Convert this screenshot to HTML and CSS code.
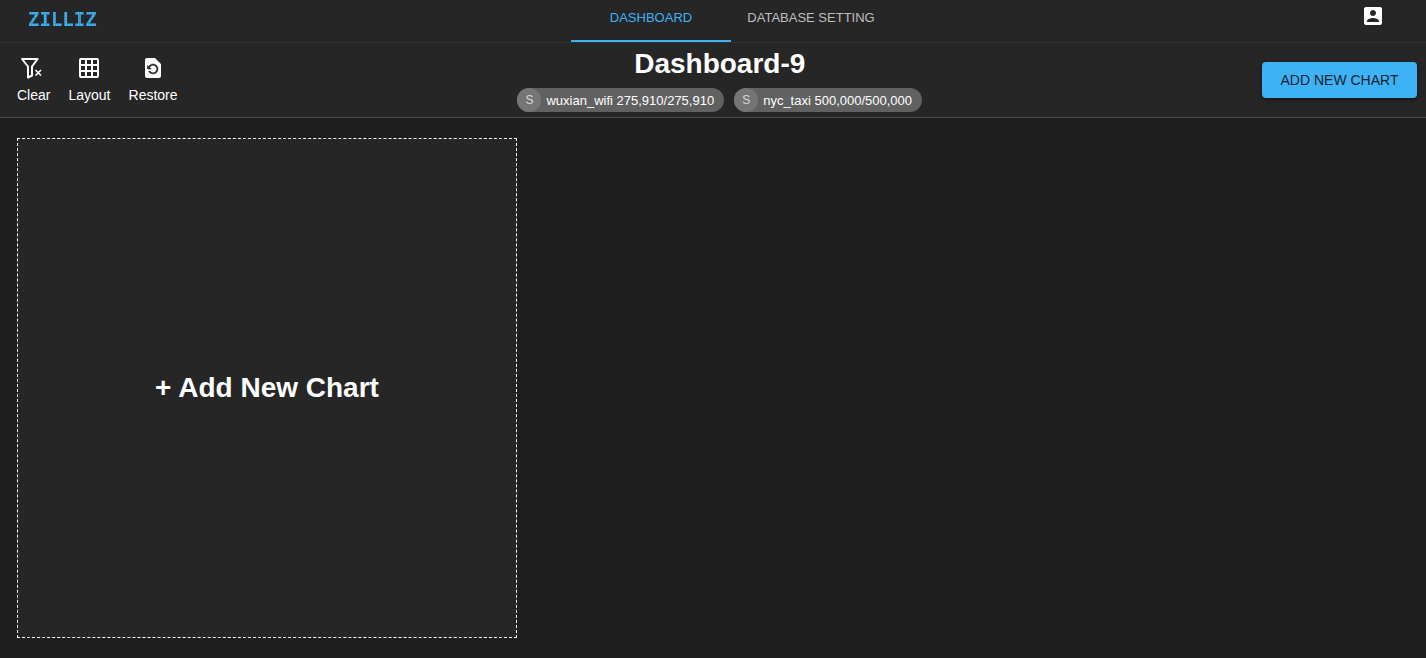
FILE: index.html
```
<!DOCTYPE html>
<html lang="en">
<head>
<meta charset="utf-8">
<title>Zilliz - Dashboard-9</title>
<meta name="viewport" content="width=device-width, initial-scale=1">
<link rel="stylesheet" href="styles.css">
</head>
<body>
<header class="topbar">
  <a class="logo" href="#">ZILLIZ</a>
  <nav class="tabs">
    <a class="tab tab-active" href="#dashboard" aria-current="page">DASHBOARD</a>
    <a class="tab" href="#database">DATABASE SETTING</a>
  </nav>
  <button class="account" type="button" aria-label="Account">
    <svg width="24" height="24" viewBox="0 0 24 24" fill="currentColor" aria-hidden="true"><path d="M3 5v14c0 1.100.890 2 2 2h14c1.100 0 2-.900 2-2V5c0-1.100-.900-2-2-2H5c-1.110 0-2 .900-2 2zm12 4c0 1.660-1.340 3-3 3s-3-1.340-3-3 1.340-3 3-3 3 1.340 3 3zm-9 8c0-2 4-3.100 6-3.100s6 1.100 6 3.100v1H6v-1z"/></svg>
  </button>
</header>
<section class="toolbar">
  <div class="tools">
    <button class="tool" type="button">
      <svg width="26" height="24" viewBox="2 0 26 24" fill="none" stroke="currentColor" aria-hidden="true"><path d="M3 3h15.600L13 10.500V19.500l-4 2V10.500z" stroke-width="2" stroke-linejoin="round"/><path d="M16.500 14l5.500 5.500M22 14l-5.500 5.500" stroke-width="1.600"/></svg>
      <span>Clear</span>
    </button>
    <button class="tool" type="button">
      <svg width="24" height="24" viewBox="0 0 24 24" fill="none" stroke="currentColor" stroke-width="2" aria-hidden="true"><rect x="3" y="3" width="18" height="18" rx="1"/><path d="M9 3v18M15 3v18M3 9h18M3 15h18"/></svg>
      <span>Layout</span>
    </button>
    <button class="tool" type="button">
      <svg width="24" height="24" viewBox="0 0 24 24" fill="currentColor" aria-hidden="true"><path d="M14 2H6c-1.100 0-1.990.900-1.990 2L4 20c0 1.100.890 2 1.990 2H18c1.100 0 2-.900 2-2V8l-6-6zm-2 16c-2.050 0-3.810-1.240-4.580-3h1.710c.630.900 1.680 1.500 2.870 1.500 1.930 0 3.500-1.570 3.500-3.500S13.930 9.500 12 9.500c-1.350 0-2.520.780-3.100 1.900l1.600 1.600h-4V9l1.300 1.300C8.690 8.920 10.230 8 12 8c2.760 0 5 2.240 5 5s-2.240 5-5 5z"/><path class="restore-arrow" d="M7.600 15.200a5 5 0 1 0 .600-5.400M6.500 9v4h4" fill="none" stroke-width=".500"/></svg>
      <span>Restore</span>
    </button>
  </div>
  <div class="summary">
    <h1 class="title">Dashboard-9</h1>
    <div class="chips">
      <div class="chip"><span class="avatar">S</span><span>wuxian_wifi 275,910/275,910</span></div>
      <div class="chip"><span class="avatar">S</span><span>nyc_taxi 500,000/500,000</span></div>
    </div>
  </div>
  <button class="add-button" type="button">ADD NEW CHART</button>
</section>
<main class="board">
  <button class="add-card" type="button">+ Add New Chart</button>
</main>
</body>
</html>
```
FILE: styles.css
```
* { box-sizing: border-box; }
body {
  margin: 0;
  min-height: 100vh;
  background: #1e1e1e;
  color: #fff;
  font-family: "Liberation Sans", Arial, sans-serif;
  font-size: 14px;
}
button {
  margin: 0;
  padding: 0;
  border: 0;
  background: none;
  color: inherit;
  font: inherit;
  cursor: pointer;
}
a { color: inherit; text-decoration: none; }
svg { display: block; }

.topbar {
  display: flex;
  justify-content: space-between;
  align-items: flex-start;
  padding: 0 41px 0 28px;
  background: #262626;
  border-bottom: 1px solid #323232;
}
.logo {
  min-width: 73px;
  padding-top: 8px;
  font: bold 19px/22px "DejaVu Sans Mono", monospace;
  color: transparent;
  background:
    repeating-linear-gradient(90deg, #2a7fb080 0 1px, transparent 1px 3px),
    repeating-linear-gradient(0deg, #2a7fb080 0 1px, transparent 1px 3px),
    #3db3f5;
  background-clip: text;
  -webkit-background-clip: text;
}
.tabs { display: flex; }
.tab {
  width: 160px;
  height: 42px;
  padding-top: 10px;
  font-size: 13px;
  line-height: 16px;
  text-align: center;
  color: #bebebe;
}
.tab-active {
  color: #3db3f5;
  border-bottom: 2px solid #3db3f5;
}
.account { padding-top: 4px; }

.toolbar {
  display: flex;
  justify-content: space-between;
  align-items: center;
  padding: 4px 9px 5px 17px;
  background: #262626;
  border-bottom: 1px solid #484848;
}
.tools { display: flex; gap: 18px; }
.tool {
  display: flex;
  flex-direction: column;
  align-items: center;
  gap: 7px;
  line-height: 16px;
}
.restore-arrow { stroke: #262626; }
.summary {
  display: flex;
  flex-direction: column;
  align-items: center;
  gap: 7px;
}
.title {
  margin: 0;
  font-size: 28px;
  line-height: 34px;
}
.chips { display: flex; gap: 10px; }
.chip {
  display: flex;
  align-items: center;
  gap: 5px;
  padding-right: 10px;
  border-radius: 12px;
  background: #616161;
  font-size: 13px;
}
.avatar {
  width: 24px;
  border-radius: 50%;
  background: #757575;
  color: #d8d8d8;
  font-size: 12px;
  line-height: 24px;
  text-align: center;
}
.add-button {
  min-width: 155px;
  padding: 10px 16px;
  border-radius: 4px;
  background: #3db3f5;
  color: #10222d;
  line-height: 16px;
  box-shadow: 0 2px 4px #00000066;
}

.board { padding: 20px 17px; }
.add-card {
  display: flex;
  align-items: center;
  justify-content: center;
  width: 100%;
  max-width: 500px;
  aspect-ratio: 1;
  border: 1px dashed #fff;
  background: #262626;
  font-size: 28px;
  font-weight: bold;
}
```
